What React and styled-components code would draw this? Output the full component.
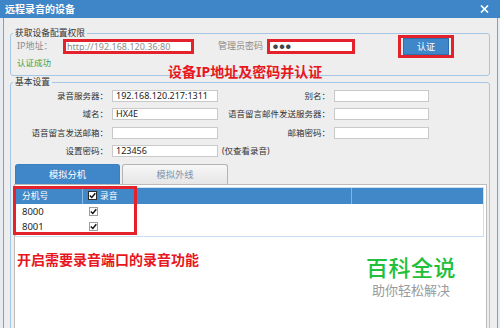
import React from 'react';
import styled, { createGlobalStyle } from 'styled-components';

const GlobalStyle = createGlobalStyle`
  html, body {
    margin: 0;
    padding: 0;
    background: #fff;
  }
  body {
    font-family: "Noto Sans", "Noto Sans CJK SC", sans-serif;
  }
`;

const Window = styled.div`
  position: relative;
  width: 500px;
  height: 328px;
  overflow: hidden;
  background: #e7ecf2;
  display: flex;
  flex-direction: column;
`;

const TitleBar = styled.div`
  flex: none;
  height: 18px;
  display: flex;
  align-items: center;
  justify-content: space-between;
  padding: 0 11px 0 5px;
  background: #3e86c7;
  color: #fff;
`;

const Title = styled.span`
  font-size: 10px;
  font-weight: 700;
  line-height: 12px;
`;

const Body = styled.div`
  flex: 1;
  margin: 0 2px 0 3px;
  padding: 15px 7px 0 6px;
  border-left: 1px solid #74a3d6;
  border-right: 1px solid #74a3d6;
  background: #eeeeee;
`;

const Group = styled.div`
  position: relative;
  border: 1px solid #a5c7e7;
  border-radius: 3px;
  padding: ${p => p.$pad};
  & + & {
    margin-top: 6px;
  }
`;

const Legend = styled.span`
  position: absolute;
  top: -7px;
  left: 2px;
  padding: 0 2px;
  background: #eeeeee;
  font-size: 8.75px;
  line-height: 12px;
  color: #333;
  white-space: nowrap;
`;

const AuthRow = styled.div`
  display: flex;
  align-items: center;
  height: 22px;
`;

const AuthLabel = styled.span`
  flex: none;
  width: ${p => p.$w}px;
  margin-left: ${p => p.$ml}px;
  font-size: 9px;
  line-height: 12px;
  color: #8a8a8a;
  white-space: nowrap;
`;

const Field = styled.div`
  box-sizing: border-box;
  flex: none;
  width: ${p => (p.$w ? `${p.$w}px` : '100%')};
  height: ${p => (p.$marked ? 15 : 12)}px;
  border: ${p => (p.$marked ? '3px solid #e3222b' : '1px solid #c9c9c9')};
  background: #fff;
  padding: 0 ${p => (p.$marked ? 1 : 3)}px;
  font-size: 9px;
  line-height: ${p => (p.$marked ? 9 : 10)}px;
  color: ${p => (p.$muted ? '#8c8c8c' : '#222')};
  white-space: nowrap;
  overflow: hidden;
`;

const Dots = styled.span`
  display: block;
  font-size: 5px;
  line-height: 9px;
  letter-spacing: 1.4px;
  color: #444;
  padding-left: 2px;
`;

const Marker = styled.div`
  flex: none;
  margin-left: ${p => p.$ml || 0}px;
  border: 3px solid #e3222b;
  padding: 0 2px;
`;

const Button = styled.div`
  box-sizing: border-box;
  width: 46px;
  height: 17px;
  display: flex;
  align-items: center;
  justify-content: center;
  background: #3f87c9;
  border: 1px solid #2f6faa;
  color: #fff;
  font-size: 9px;
`;

const Status = styled.div`
  padding-left: 6px;
  font-size: 8.5px;
  line-height: 12px;
  color: #3f9e3a;
`;

const FormGrid = styled.div`
  display: grid;
  grid-template-columns: 101px 106px 116px 95px;
  grid-auto-rows: 12px;
  row-gap: 6.3px;
`;

const FormLabel = styled.span`
  font-size: 8.5px;
  line-height: 12px;
  color: #333;
  white-space: nowrap;
  text-align: ${p => (p.$left ? 'left' : 'right')};
  padding: ${p => (p.$left ? '0 0 0 4px' : '0 4px 0 0')};
`;

const TabArea = styled.div`
  margin: 7px 2px 0 3px;
`;

const TabList = styled.div`
  display: flex;
  gap: 2px;
  height: 20px;
  padding-left: 1px;
`;

const Tab = styled.div`
  box-sizing: border-box;
  width: ${p => p.$w}px;
  display: flex;
  align-items: center;
  justify-content: center;
  border-radius: 3px 3px 0 0;
  font-size: 9.25px;
  ${p =>
    p.$active
      ? 'background: #3f87c9; color: #fff; border: 1px solid #3a7fbf; border-bottom: none;'
      : 'background: linear-gradient(#f7f7f7, #e6e6e6); color: #7d93ab; border: 1px solid #b4b4b4; border-bottom: none;'}
`;

const Panel = styled.div`
  position: relative;
  height: 160px;
  border: 1px solid #bcbcbc;
  border-bottom: none;
  background: #fff;
  padding: 2px 2px 0 0;
`;

const Grid = styled.div`
  border: 1px solid #c8def2;
  padding-bottom: 2px;
`;

const GridLine = styled.div`
  display: grid;
  grid-template-columns: 67px 269px 1fr;
  height: ${p => (p.$head ? 16 : 15)}px;
  ${p => (p.$head ? 'background: #4188c9; color: #fff; font-size: 8.75px;' : 'color: #222; font-size: 9.5px;')}
`;

const Cell = styled.div`
  display: flex;
  align-items: center;
  gap: 3px;
  padding-left: ${p => p.$pl || 0}px;
  border-right: 1px solid ${p => p.$edge || 'transparent'};
  white-space: nowrap;
`;

const Box = styled.span`
  box-sizing: border-box;
  width: 9px;
  height: 9px;
  display: inline-flex;
  align-items: center;
  justify-content: center;
  border: 1px solid ${p => (p.$dark ? '#2a2a2a' : '#9d9d9d')};
  background: #fff;
`;

const TableMark = styled.div`
  position: absolute;
  left: -2px;
  top: 1px;
  width: 124px;
  height: 49px;
  box-sizing: border-box;
  border: 3px solid #e3222b;
`;

const Note = styled.div`
  position: absolute;
  left: ${p => p.$x}px;
  top: ${p => p.$y}px;
  font-size: 14px;
  font-weight: 700;
  line-height: 16px;
  color: #e8161d;
  white-space: nowrap;
`;

const Brand = styled.div`
  position: absolute;
  left: 362px;
  top: 256px;
  width: 98px;
  display: flex;
  flex-direction: column;
  align-items: center;
`;

const BrandName = styled.span`
  font-size: 22px;
  font-weight: 500;
  line-height: 22px;
  color: #21c03a;
  letter-spacing: 0.5px;
`;

const BrandSlogan = styled.span`
  margin-top: 5px;
  font-size: 13px;
  line-height: 15px;
  color: #9a9a9a;
`;

const CloseIcon = () => (
  <svg width="9" height="8" viewBox="0 0 9 8">
    <path d="M1 0.5 L8 7.5 M8 0.5 L1 7.5" stroke="#fff" strokeWidth="1.6" />
  </svg>
);

const Checkbox = ({ dark }) => (
  <Box $dark={dark}>
    <svg width="7" height="7" viewBox="0 0 7 7">
      <path d="M0.8 3.4 L2.8 5.5 L6.3 1.2" stroke="#111" strokeWidth="1.4" fill="none" />
    </svg>
  </Box>
);

const basicRows = [
  ['录音服务器：', '192.168.120.217:1311', '别名：', ''],
  ['域名：', 'HX4E', '语音留言邮件发送服务器：', ''],
  ['语音留言发送邮箱：', '', '邮箱密码：', ''],
];

const extensions = ['8000', '8001'];

const App = () => (
  <>
    <GlobalStyle />
    <Window>
      <TitleBar>
        <Title>远程录音的设备</Title>
        <CloseIcon />
      </TitleBar>
      <Body>
        <Group $pad="1px 0 6px 0">
          <Legend>获取设备配置权限</Legend>
          <AuthRow>
            <AuthLabel $ml={6} $w={46}>IP地址：</AuthLabel>
            <Field $marked $muted $w={131}>http://192.168.120.36:80</Field>
            <AuthLabel $ml={24} $w={49}>管理员密码</AuthLabel>
            <Field $marked $w={88}>
              <Dots>●●●</Dots>
            </Field>
            <Marker $ml={43}>
              <Button>认证</Button>
            </Marker>
          </AuthRow>
          <Status>认证成功</Status>
        </Group>
        <Group $pad="7px 0 0 0">
          <Legend>基本设置</Legend>
          <FormGrid>
            {basicRows.map(([l1, v1, l2, v2]) => (
              <React.Fragment key={l1}>
                <FormLabel>{l1}</FormLabel>
                <Field>{v1}</Field>
                <FormLabel>{l2}</FormLabel>
                <Field>{v2}</Field>
              </React.Fragment>
            ))}
            <FormLabel>设置密码：</FormLabel>
            <Field>123456</Field>
            <FormLabel $left>(仅查看录音)</FormLabel>
          </FormGrid>
          <TabArea>
            <TabList>
              <Tab $active $w={105}>模拟分机</Tab>
              <Tab $w={106}>模拟外线</Tab>
            </TabList>
            <Panel>
              <Grid>
                <GridLine $head>
                  <Cell $pl={6} $edge="#8dbbe3">分机号</Cell>
                  <Cell $pl={5} $edge="#e3a23c">
                    <Checkbox dark />
                    录音
                  </Cell>
                  <Cell />
                </GridLine>
                {extensions.map(ext => (
                  <GridLine key={ext}>
                    <Cell $pl={6}>{ext}</Cell>
                    <Cell $pl={6}>
                      <Checkbox />
                    </Cell>
                    <Cell />
                  </GridLine>
                ))}
              </Grid>
              <TableMark />
            </Panel>
          </TabArea>
        </Group>
      </Body>
      <Note $x={168} $y={64}>设备IP地址及密码并认证</Note>
      <Note $x={17} $y={252}>开启需要录音端口的录音功能</Note>
      <Brand>
        <BrandName>百科全说</BrandName>
        <BrandSlogan>助你轻松解决</BrandSlogan>
      </Brand>
    </Window>
  </>
);

export default App;
